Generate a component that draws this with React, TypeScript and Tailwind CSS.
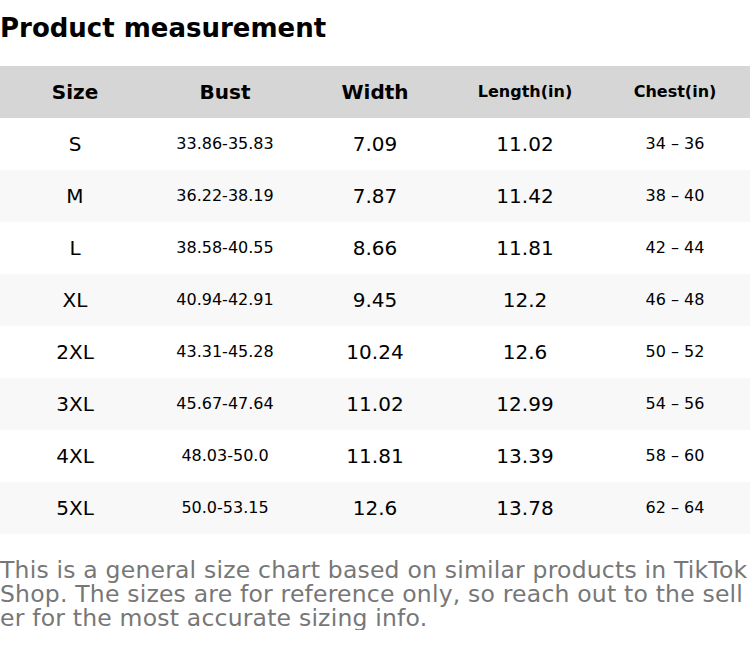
import React from "react";

const rows = [
  { size: "S", bust: "33.86-35.83", width: "7.09", length: "11.02", chest: "34 – 36" },
  { size: "M", bust: "36.22-38.19", width: "7.87", length: "11.42", chest: "38 – 40" },
  { size: "L", bust: "38.58-40.55", width: "8.66", length: "11.81", chest: "42 – 44" },
  { size: "XL", bust: "40.94-42.91", width: "9.45", length: "12.2", chest: "46 – 48" },
  { size: "2XL", bust: "43.31-45.28", width: "10.24", length: "12.6", chest: "50 – 52" },
  { size: "3XL", bust: "45.67-47.64", width: "11.02", length: "12.99", chest: "54 – 56" },
  { size: "4XL", bust: "48.03-50.0", width: "11.81", length: "13.39", chest: "58 – 60" },
  { size: "5XL", bust: "50.0-53.15", width: "12.6", length: "13.78", chest: "62 – 64" },
];

const App: React.FC = () => {
  return (
    <div className="w-[750px] bg-white text-black font-['DejaVu_Sans',sans-serif]">
      <h1 className="text-[26px] font-bold leading-[30px] pt-[13px] pb-[23px]">Product measurement</h1>

      <div className="grid grid-cols-5 h-[52px] bg-[#d6d6d6] font-bold items-center text-center">
        <div className="text-[20px]">Size</div>
        <div className="text-[20px]">Bust</div>
        <div className="text-[20px]">Width</div>
        <div className="text-[16px]">Length(in)</div>
        <div className="text-[16px]">Chest(in)</div>
      </div>

      {rows.map((r, i) => (
        <div
          key={r.size}
          className={`grid grid-cols-5 h-[52px] items-center text-center ${i % 2 === 1 ? "bg-[#f8f8f8]" : "bg-white"}`}
        >
          <div className="text-[20px]">{r.size}</div>
          <div className="text-[16px]">{r.bust}</div>
          <div className="text-[20px]">{r.width}</div>
          <div className="text-[20px]">{r.length}</div>
          <div className="text-[16px]">{r.chest}</div>
        </div>
      ))}

      <p className="mt-[24px] text-[23.5px] leading-[24px] tracking-[0.2px] text-[#777777] break-all">
        This is a general size chart based on similar products in TikTok Shop. The sizes are for reference only, so reach out to the seller for the most accurate sizing info.
      </p>
    </div>
  );
};

export default App;
